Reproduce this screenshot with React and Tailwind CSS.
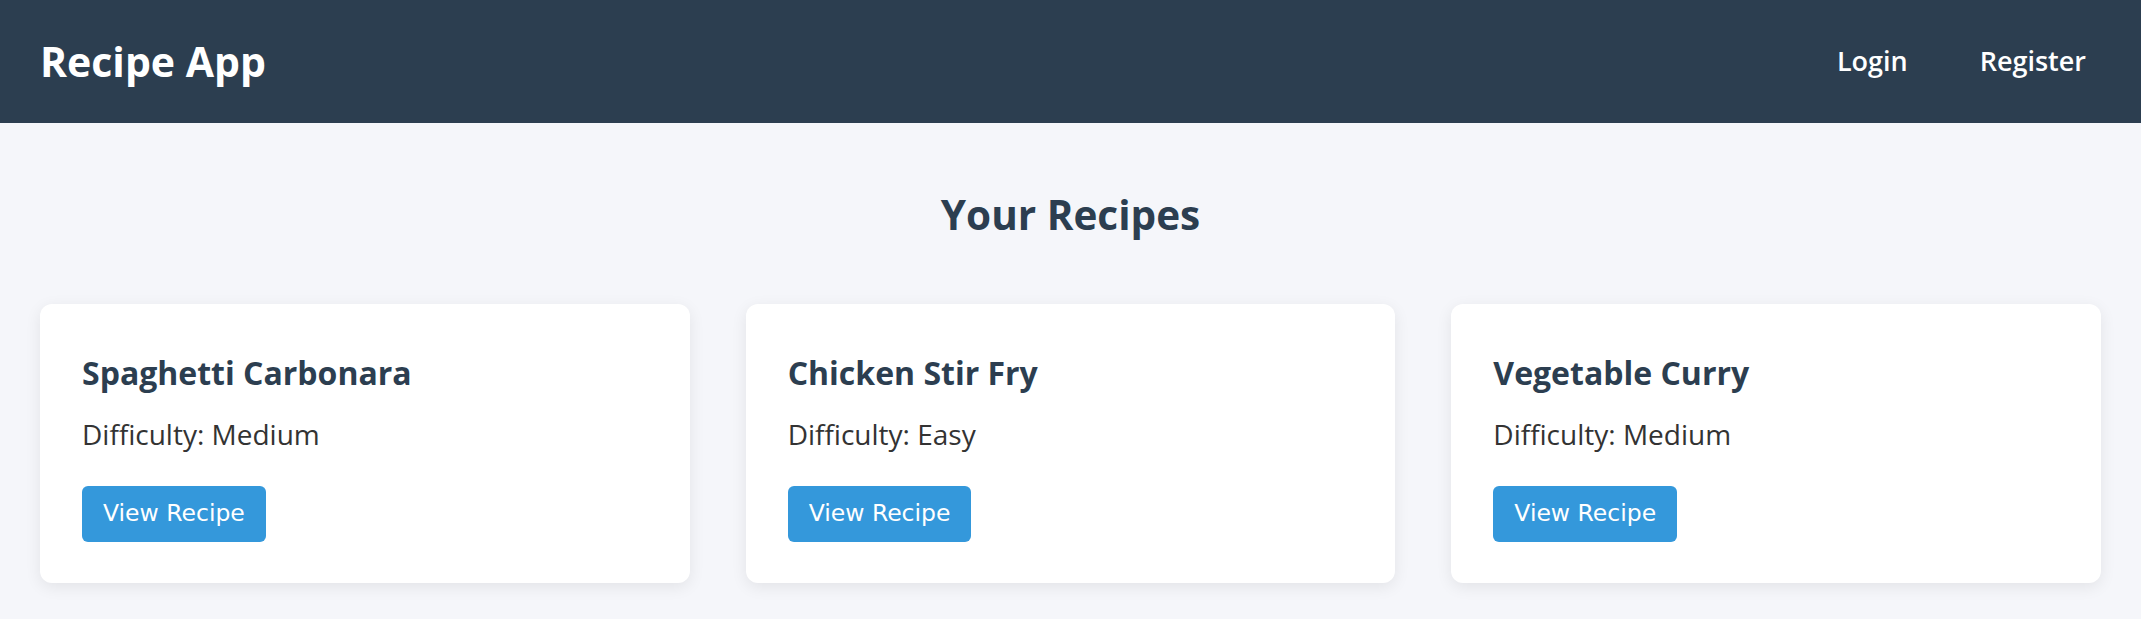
const recipes = [
  { id: 1, title: 'Spaghetti Carbonara', difficulty: 'Medium' },
  { id: 2, title: 'Chicken Stir Fry', difficulty: 'Easy' },
  { id: 3, title: 'Vegetable Curry', difficulty: 'Medium' },
];

function Navbar() {
  return (
    <header className="h-[123px] bg-[#2c3e50] px-10 flex items-center justify-between">
      <h1 className="text-[41px] leading-none font-bold text-white">Recipe App</h1>
      <nav className="flex items-center gap-[42px]">
        <a href="#" className="px-[15px] text-[27px] font-semibold text-white">Login</a>
        <a href="#" className="px-[15px] text-[27px] font-semibold text-white">Register</a>
      </nav>
    </header>
  );
}

function RecipeCard({ recipe }) {
  return (
    <div className="bg-white rounded-xl shadow-[0_4px_16px_rgba(0,0,0,0.08)] px-[42px] pt-12 pb-[41px]">
      <h3 className="text-[32px] leading-[41px] font-bold text-[#2c3e50]">{recipe.title}</h3>
      <p className="mt-[20px] text-[28px] leading-[43px] text-[#333]">Difficulty: {recipe.difficulty}</p>
      <button className="mt-[30px] h-[56px] px-[21px] rounded-md bg-[#3498db] text-white text-[23.5px] font-['DejaVu_Sans',sans-serif]">
        View Recipe
      </button>
    </div>
  );
}

export default function App() {
  return (
    <div className="min-h-screen bg-[#f5f6fa] font-['Open_Sans',sans-serif]">
      <Navbar />
      <main className="px-10">
        <h2 className="mt-[67px] text-center text-[40.5px] leading-[49px] font-bold text-[#2c3e50]">Your Recipes</h2>
        <div className="mt-[65px] grid grid-cols-3 gap-14">
          {recipes.map((r) => (
            <RecipeCard key={r.id} recipe={r} />
          ))}
        </div>
      </main>
    </div>
  );
}
